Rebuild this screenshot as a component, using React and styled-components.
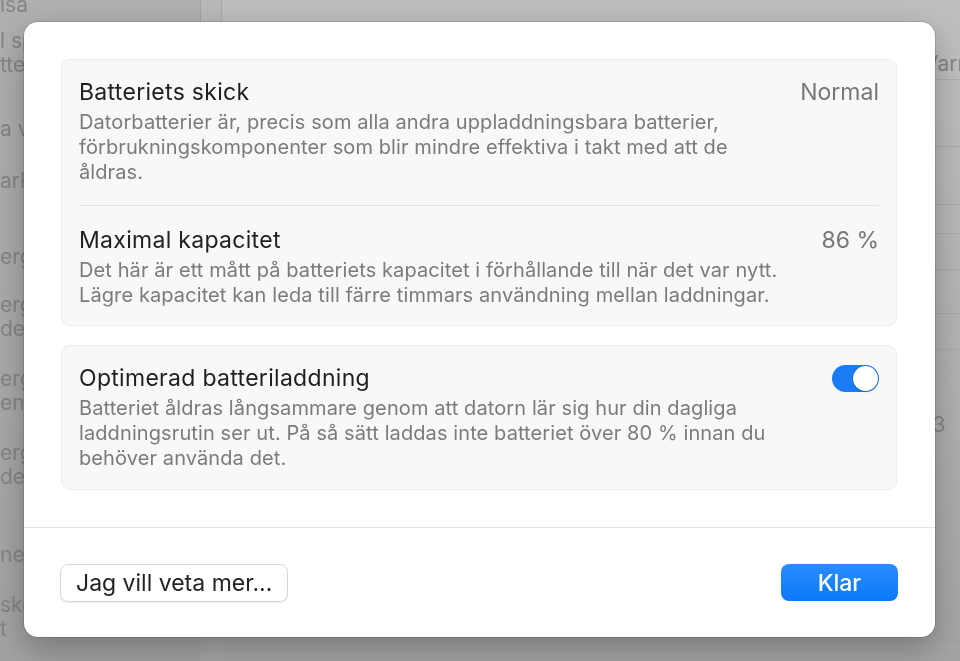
import React, { useState } from "react";
import styled, { createGlobalStyle } from "styled-components";

const sidebarItems = [
  { lines: ["isa"], gap: -7 },
  { lines: ["l sparläge", "tterier"], gap: 12 },
  { lines: ["a vid"], gap: 40 },
  { lines: ["arläge"], gap: 28 },
  { lines: ["ergi"], gap: 52 },
  { lines: ["ergi", "dela"], gap: 24 },
  { lines: ["ergi", "enhet"], gap: 26 },
  { lines: ["ergi", "dela"], gap: 26 },
  { lines: ["nerig"], gap: 54 },
  { lines: ["skärm", "t"], gap: 26 },
];

const tableRows = [
  { h: 79, label: "Varnar", header: true },
  { h: 66 },
  { h: 57 },
  { h: 28 },
  { h: 35 },
  { h: 43 },
  { h: 35 },
  { h: 132, label: "13" },
  { h: 32 },
  { h: 60 },
  { h: 70 },
];

const columns = [35, 20, 91, 91, 91, 91, 91, 91, 91, 91, 91];

export default function App() {
  const [optimized, setOptimized] = useState(true);

  return (
    <>
      <GlobalStyle />
      <Backdrop>
        <Sidebar>
          {sidebarItems.map((item, i) => (
            <SidebarItem key={i} $gap={item.gap}>
              {item.lines.map((l, j) => (
                <div key={j}>{l}</div>
              ))}
            </SidebarItem>
          ))}
        </Sidebar>
        <Divider />
        <Main>
          {tableRows.map((row, i) => (
            <TableRow key={i} $h={row.h} $header={row.header}>
              {columns.map((w, j) => (
                <Cell key={j} $w={w} $header={row.header}>
                  {j === columns.length - 2 && row.label}
                </Cell>
              ))}
            </TableRow>
          ))}
        </Main>
      </Backdrop>

      <Dialog>
        <Body>
          <Card>
            <Row $top={18} $bottom={20}>
              <RowText>
                <RowTitle>Batteriets skick</RowTitle>
                <RowDesc>
                  Datorbatterier är, precis som alla andra uppladdningsbara batterier,
                  <br />
                  förbrukningskomponenter som blir mindre effektiva i takt med att de
                  <br />
                  åldras.
                </RowDesc>
              </RowText>
              <RowValue>Normal</RowValue>
            </Row>
            <RowDivider />
            <Row $top={20} $bottom={17}>
              <RowText>
                <RowTitle>Maximal kapacitet</RowTitle>
                <RowDesc>
                  Det här är ett mått på batteriets kapacitet i förhållande till när det var nytt.
                  <br />
                  Lägre kapacitet kan leda till färre timmars användning mellan laddningar.
                </RowDesc>
              </RowText>
              <RowValue>86 %</RowValue>
            </Row>
          </Card>

          <Card>
            <Row $top={18} $bottom={18}>
              <RowText>
                <RowTitle>Optimerad batteriladdning</RowTitle>
                <RowDesc>
                  Batteriet åldras långsammare genom att datorn lär sig hur din dagliga
                  <br />
                  laddningsrutin ser ut. På så sätt laddas inte batteriet över 80 % innan du
                  <br />
                  behöver använda det.
                </RowDesc>
              </RowText>
              <Toggle
                type="button"
                $on={optimized}
                onClick={() => setOptimized((v) => !v)}
                aria-pressed={optimized}
              >
                <Knob $on={optimized} />
              </Toggle>
            </Row>
          </Card>
        </Body>

        <Footer>
          <SecondaryButton type="button">Jag vill veta mer...</SecondaryButton>
          <PrimaryButton type="button">Klar</PrimaryButton>
        </Footer>
      </Dialog>
    </>
  );
}

/* ================== STYLES ================== */

const GlobalStyle = createGlobalStyle`
  html, body {
    margin: 0;
    padding: 0;
    height: 100%;
    overflow: hidden;
  }
  body {
    font-family: Inter, "Noto Sans", sans-serif;
    background: #b2b2b2;
  }
  #root {
    height: 100%;
  }
`;

const Backdrop = styled.div`
  display: flex;
  height: 100vh;
  overflow: hidden;
  filter: blur(0.6px);
`;

const Sidebar = styled.div`
  width: 200px;
  flex-shrink: 0;
  background: linear-gradient(180deg, #b0b0b0, #a8a8a8 60%, #a2a2a2);
  color: #858585;
  font-size: 21px;
  line-height: 24px;
  white-space: nowrap;
  overflow: hidden;
`;

const SidebarItem = styled.div`
  margin-top: ${(p) => p.$gap}px;
`;

const Divider = styled.div`
  width: 20px;
  flex-shrink: 0;
  background: linear-gradient(180deg, #b9b9b9, #a6a6a6);
  border-left: 1px solid #a3a3a3;
  border-right: 1px solid #a9a9a9;
`;

const Main = styled.div`
  flex: 1;
  display: flex;
  flex-direction: column;
  background: linear-gradient(180deg, #c0c0c0, #b3b3b3 50%, #a4a4a4);
  overflow: hidden;
`;

const TableRow = styled.div`
  display: flex;
  height: ${(p) => p.$h}px;
  flex-shrink: 0;
  border-bottom: 1px solid ${(p) => (p.$header ? "#adadad" : "#a9a9a9")};
  background: ${(p) => (p.$header ? "#bebebe" : "transparent")};
`;

const Cell = styled.div`
  width: ${(p) => p.$w}px;
  flex-shrink: 0;
  border-right: 1px dashed ${(p) => (p.$header ? "transparent" : "#a2a2a2")};
  color: #858585;
  font-size: 21px;
  display: flex;
  align-items: flex-end;
  padding: 0 0 ${(p) => (p.$header ? "3px" : "45px")} 10px;
  box-sizing: border-box;
  white-space: nowrap;
`;

const Dialog = styled.div`
  position: fixed;
  left: 24px;
  top: 22px;
  width: 911px;
  height: 615px;
  box-sizing: border-box;
  background: #ffffff;
  border-radius: 14px;
  box-shadow: 0 0 0 1px rgba(0, 0, 0, 0.12), 0 12px 32px rgba(0, 0, 0, 0.28);
  display: flex;
  flex-direction: column;
  overflow: hidden;
`;

const Body = styled.div`
  flex: 1;
  display: flex;
  flex-direction: column;
  gap: 19px;
  padding: 37px 38px 0 37px;
  border-bottom: 1px solid #e2e2e2;
`;

const Card = styled.div`
  background: #f8f8f8;
  border: 1px solid #ececec;
  border-radius: 9px;
  padding: 0 17px 0 17px;
`;

const Row = styled.div`
  display: flex;
  align-items: flex-start;
  justify-content: space-between;
  padding: ${(p) => p.$top}px 0 ${(p) => p.$bottom}px 0;
`;

const RowText = styled.div`
  display: flex;
  flex-direction: column;
  gap: 4px;
`;

const RowTitle = styled.div`
  font-size: 23px;
  line-height: 28px;
  color: #1f1f1f;
  letter-spacing: 0.3px;
`;

const RowDesc = styled.div`
  font-size: 20px;
  line-height: 25px;
  color: #7b7b7b;
  letter-spacing: 0.1px;
  white-space: nowrap;
`;

const RowValue = styled.div`
  font-size: 23px;
  line-height: 28px;
  color: #777777;
`;

const RowDivider = styled.div`
  height: 1px;
  background: #e3e3e3;
`;

const Toggle = styled.button`
  margin-top: 1px;
  width: 47px;
  height: 27px;
  border-radius: 14px;
  border: none;
  padding: 0 1px;
  display: flex;
  align-items: center;
  justify-content: ${(p) => (p.$on ? "flex-end" : "flex-start")};
  background: ${(p) => (p.$on ? "#1a7cf5" : "#d9d9d9")};
  cursor: pointer;
`;

const Knob = styled.span`
  width: 25px;
  height: 25px;
  border-radius: 50%;
  background: #ffffff;
  box-shadow: 0 0 0 0.5px rgba(0, 0, 0, 0.15), 0 1px 2px rgba(0, 0, 0, 0.15);
`;

const Footer = styled.div`
  height: 109px;
  flex-shrink: 0;
  display: flex;
  align-items: center;
  justify-content: space-between;
  padding: 0 37px 0 36px;
  box-sizing: border-box;
`;

const SecondaryButton = styled.button`
  height: 38px;
  padding: 0 15px;
  border-radius: 8px;
  border: 1px solid #d8d8d8;
  background: #ffffff;
  box-shadow: 0 1px 1px rgba(0, 0, 0, 0.08);
  font-family: Inter, "Noto Sans", sans-serif;
  font-size: 23px;
  color: #222222;
  cursor: pointer;
`;

const PrimaryButton = styled.button`
  height: 37px;
  width: 117px;
  border-radius: 8px;
  border: none;
  background: linear-gradient(180deg, #2b8cff, #0a78f7);
  font-family: Inter, "Noto Sans", sans-serif;
  font-size: 23px;
  font-weight: 500;
  color: #ffffff;
  cursor: pointer;
`;
